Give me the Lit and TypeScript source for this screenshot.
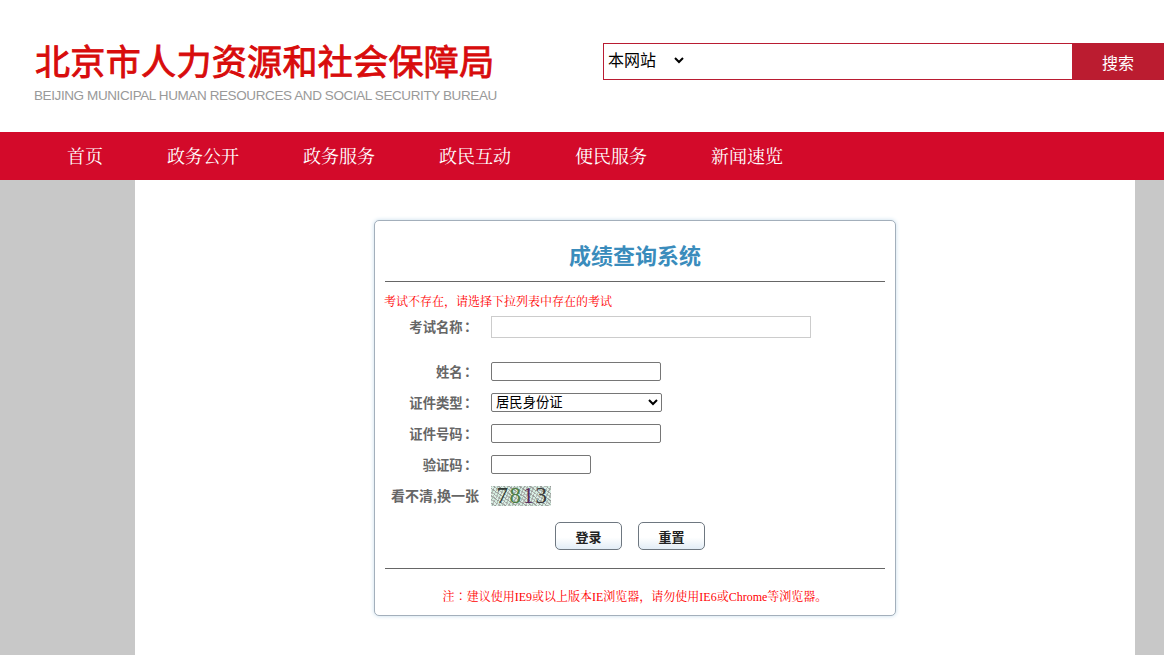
import { LitElement, html, css } from "lit";
import { customElement } from "lit/decorators.js";

const NAV = ["首页", "政务公开", "政务服务", "政民互动", "便民服务", "新闻速览"];

@customElement("app-root")
export class AppRoot extends LitElement {
  static styles = css`
    :host { display: flex; flex-direction: column; height: 100vh; overflow: hidden; font-family: "Liberation Sans", "Noto Sans CJK SC", sans-serif; background: #fff; }
    .header { height: 132px; flex: none; display: flex; box-sizing: border-box; }
    .logo { width: 603px; flex: none; box-sizing: border-box; padding: 41px 0 0 34px; }
    .logo-cn { font-size: 35px; line-height: 44px; height: 44px; font-weight: 400; -webkit-text-stroke: .9px #d80c0c; color: #d80c0c; white-space: nowrap; letter-spacing: .35px; margin-left: 1px; }
    .logo-en { margin-top: 2px; font-size: 13.5px; line-height: 18px; color: #999; white-space: nowrap; letter-spacing: -.4px; }
    .search { margin-top: 43px; flex: 1; height: 37px; display: flex; box-sizing: border-box; border: 1px solid #b91c32; border-right: 0; }
    .search select { width: 83px; height: 33px; border: 0; background: #fff; font: 16px "Liberation Sans", "Noto Sans CJK SC", sans-serif; color: #000; padding: 0; outline: 0; }
    .search input { flex: 1; min-width: 0; border: 0; outline: 0; padding: 0; }
    .search button { width: 92px; border: 0; background: #bb1c30; color: #fff; font: 16px/1 "Liberation Sans", "Noto Sans CJK SC", sans-serif; padding: 4px 0 0; }
    .nav { height: 48px; flex: none; display: flex; background: #d30a2a; padding-left: 35px; }
    .nav a { padding: 0 32px; color: #fff; font: 18px/46px "Noto Serif CJK SC", "Liberation Serif", serif; white-space: nowrap; }
    .stage { flex: 1; background: #c8c8c8; min-height: 0; }
    .page { width: 1000px; height: 100%; margin-left: 135px; background: #fff; box-sizing: border-box; padding-top: 40px; display: flex; justify-content: center; }
    .card { width: 522px; height: 396px; box-sizing: border-box; padding: 0 10px; background: #fff; border: 1px solid #a3afbb; border-radius: 5px; box-shadow: 0 0 4px #c5dcec; }
    h1 { margin: 0; height: 61px; border-bottom: 1px solid #666; text-align: center; font-size: 22px; line-height: 72px; font-weight: 700; color: #3a8cbc; box-sizing: border-box; }
    .err { font: 12px/18px "Noto Serif CJK SC", "Liberation Serif", serif; color: #f00; margin: 10px 0 0 -1px; height: 25px; line-height: 18px; white-space: nowrap; }
    .form { display: flex; flex-direction: column; gap: 12px; }
    .row { display: flex; align-items: center; height: 19px; }
    .row.name { height: 22px; margin-bottom: 12px; margin-top: -1px; }
    .row.cap { height: 20px; }
    label { width: 91px; flex: none; margin-right: 15px; margin-top: -1px; text-align: right; font-size: 13.333px; font-weight: 700; color: #666; white-space: nowrap; }
    label .colon { font-family: "Noto Sans CJK JP", sans-serif; margin-left: -2px; margin-right: 2px; }
    .cap label { width: 94px; margin-right: 12px; margin-top: -2px; font-size: 14px; }
    input.f { box-sizing: border-box; height: 19px; width: 170px; border: 1px solid #767676; border-radius: 2px; padding: 0; background: #fff; outline: 0; }
    input.f.short { width: 100px; }
    input.f.exam { width: 320px; height: 22px; border-color: #ccc; border-radius: 0; }
    select.f { box-sizing: border-box; width: 171px; height: 19px; font: 13.333px "Liberation Sans", "Noto Sans CJK SC", sans-serif; padding: 0; border: 1px solid #767676; border-radius: 2px; background: #fff; color: #000; outline: 0; }
    .captcha { width: 60px; height: 20px; box-sizing: border-box; padding-left: 3px; display: flex; justify-content: center; align-items: center; font: 23px/20px "Liberation Serif", serif; letter-spacing: 1.5px; background:
      repeating-linear-gradient(115deg, rgba(140,140,140,.5) 0 1px, transparent 1px 3px),
      repeating-linear-gradient(35deg, #d3ecdf 0 2px, #a3a8a5 2px 3px, #dcefe6 3px 5px, #b3b9b4 5px 6px); }
    .captcha b { font-weight: 400; }
    .btns { display: flex; justify-content: center; gap: 16px; margin-top: 16px; height: 46px; border-bottom: 1px solid #666; padding-right: 10px; }
    .btns button { width: 67px; height: 28px; border: 1px solid #6e7780; border-radius: 5px; background: linear-gradient(#fff 55%, #e2edf6); font: 700 13px "Liberation Sans", "Noto Sans CJK SC", sans-serif; color: #222; padding: 0; }
    .note { margin-top: 19px; text-align: center; font: 12px/16px "Noto Serif CJK SC", "Liberation Serif", serif; color: #f00; white-space: nowrap; }
    .lat { font: 12px/16px "Liberation Serif", serif; }
    .note .colon { font-family: "Noto Serif CJK JP", serif; }
  `;

  render() {
    return html`
      <div class="header">
        <div class="logo">
          <div class="logo-cn">北京市人力资源和社会保障局</div>
          <div class="logo-en">BEIJING MUNICIPAL HUMAN RESOURCES AND SOCIAL SECURITY BUREAU</div>
        </div>
        <div class="search">
          <select><option>本网站</option></select>
          <input />
          <button>搜索</button>
        </div>
      </div>
      <div class="nav">${NAV.map((n) => html`<a>${n}</a>`)}</div>
      <div class="stage">
        <div class="page">
          <div class="card">
            <h1>成绩查询系统</h1>
            <div class="err">考试不存在，请选择下拉列表中存在的考试</div>
            <div class="form">
              <div class="row name"><label>考试名称<span class="colon">：</span></label><input class="f exam" /></div>
              <div class="row"><label>姓名<span class="colon">：</span></label><input class="f" /></div>
              <div class="row"><label>证件类型<span class="colon">：</span></label><select class="f"><option>居民身份证</option></select></div>
              <div class="row"><label>证件号码<span class="colon">：</span></label><input class="f" /></div>
              <div class="row"><label>验证码<span class="colon">：</span></label><input class="f short" /></div>
              <div class="row cap"><label>看不清,换一张</label>
                <div class="captcha"><b style="color:#2f3a35">7</b><b style="color:#4d7f45">8</b><b style="color:#5a2a5c">1</b><b style="color:#3a3a3a">3</b></div>
              </div>
            </div>
            <div class="btns"><button>登录</button><button>重置</button></div>
            <div class="note">注<span class="colon">：</span>建议使用<span class="lat">IE9</span>或以上版本<span class="lat">IE</span>浏览器，请勿使用<span class="lat">IE6</span>或<span class="lat">Chrome</span>等浏览器。</div>
          </div>
        </div>
      </div>
    `;
  }
}
